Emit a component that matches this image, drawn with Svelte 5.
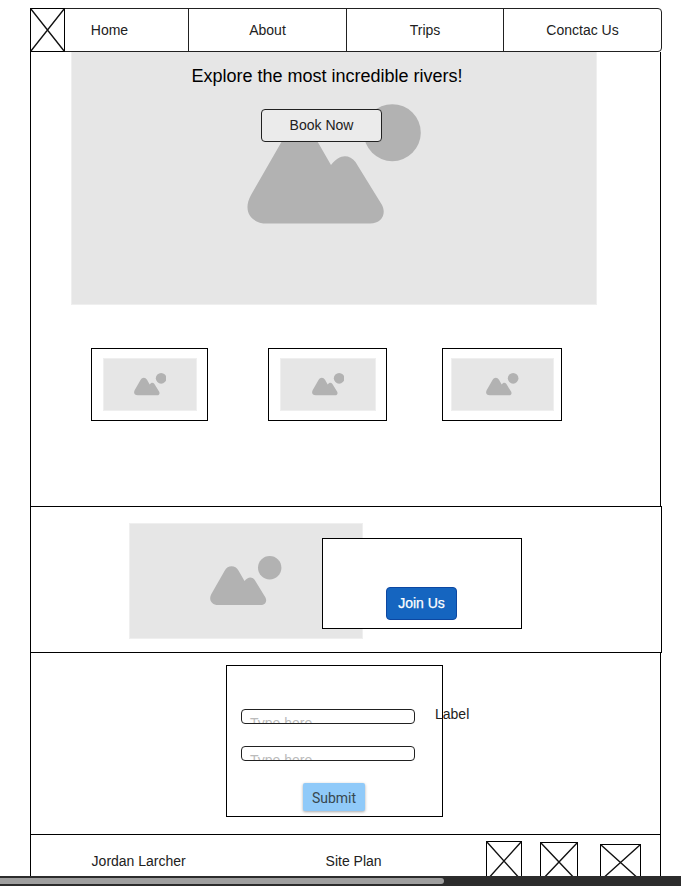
<script>
  const links = ['Home', 'About', 'Trips', 'Conctac Us'];
  const cards = [
    { width: 117, gap: 0, left: 11, right: 10 },
    { width: 119, gap: 60, left: 11, right: 10 },
    { width: 120, gap: 55, left: 8, right: 7 }
  ];
  const socials = [
    { width: 36, height: 40, top: 6 },
    { width: 38, height: 40, top: 7 },
    { width: 41, height: 37, top: 9 }
  ];
</script>

{#snippet picture(width)}
  <svg class="picture" {width} height={(width * 120) / 174} viewBox="0 0 174 120" aria-hidden="true">
    <path d="M84 61 L69.6 36 C62 21.5 43 21.5 35.6 36 L4 91 C-4.5 106 3 119.5 20 119.5 H123 C135 119.5 139.5 110 135 101 L108.5 58 C102 49.5 92 50 84 61Z" />
    <circle cx="145.3" cy="28.7" r="28.5" />
  </svg>
{/snippet}

{#snippet crossed(width, height)}
  <svg class="crossed" {width} {height} aria-hidden="true">
    <rect x=".5" y=".5" width={width - 1} height={height - 1} />
    <path d="M.5 .5 L{width - 0.5} {height - 0.5} M{width - 0.5} .5 L.5 {height - 0.5}" />
  </svg>
{/snippet}

<div class="page">
  <nav>
    <span class="logo">{@render crossed(35, 44)}</span>
    {#each links as link}
      <a href="#top">{link}</a>
    {/each}
  </nav>
  <div class="frame">
    <section class="hero">
      <h1>Explore the most incredible rivers!</h1>
      <button class="book">Book Now</button>
      <div class="hero-picture">{@render picture(174)}</div>
    </section>

    <section class="cards">
      {#each cards as card}
        <div
          class="card"
          style="width:{card.width}px;margin-left:{card.gap}px;padding-left:{card.left}px;padding-right:{card.right}px"
        >
          <div class="placeholder">{@render picture(32.5)}</div>
        </div>
      {/each}
    </section>

    <section class="join">
      <div class="placeholder">{@render picture(71.5)}</div>
      <div class="panel"><button>Join Us</button></div>
    </section>

    <section class="contact">
      <form>
        <div class="field"><span>Type here</span></div>
        <div class="field"><span>Type here</span></div>
        <button type="button">Submit</button>
      </form>
      <span class="label">Label</span>
    </section>

    <footer>
      <span class="author">Jordan Larcher</span>
      <span class="plan">Site Plan</span>
      <div class="socials">
        {#each socials as s}
          <span style="margin-top:{s.top}px">{@render crossed(s.width, s.height)}</span>
        {/each}
      </div>
    </footer>
  </div>
  <div class="scrollbar"><div class="thumb"></div></div>
</div>

<style>
  * {
    box-sizing: border-box;
  }
  .page {
    display: flex;
    flex-direction: column;
    width: 681px;
    height: 886px;
    padding-top: 8px;
    overflow: hidden;
    background: #fff;
    color: #212121;
    font: 14px/16px 'Liberation Sans', Arial, sans-serif;
  }
  svg {
    display: block;
    flex: none;
  }
  button {
    font: inherit;
    padding: 0;
    display: block;
  }
  .picture {
    fill: #b2b2b2;
  }
  .crossed {
    fill: none;
    stroke: #000;
    stroke-width: 1;
  }
  .crossed path {
    stroke: #111;
    stroke-width: 1.4;
  }
  nav {
    display: flex;
    flex: none;
    width: 632px;
    height: 44px;
    margin-left: 30px;
    border: 1px solid #212121;
    border-radius: 0 4px 4px 0;
    background: #fff;
  }
  .logo {
    flex: none;
    width: 34px;
    margin: -1px 0 0 -1px;
    height: 44px;
  }
  nav a {
    flex: none;
    width: 158px;
    border-right: 1px solid #212121;
    color: inherit;
    text-decoration: none;
    text-align: center;
    line-height: 43px;
  }
  nav a:first-of-type {
    width: 125px;
    padding-right: 33px;
  }
  nav a:nth-of-type(3) {
    width: 157px;
  }
  nav a:last-child {
    width: 157px;
    border-right: 0;
  }
  .frame {
    flex: none;
    width: 631px;
    height: 824px;
    margin-left: 30px;
    border: solid #000;
    border-width: 0 1px;
  }
  .hero {
    display: flex;
    flex-direction: column;
    align-items: center;
    position: relative;
    width: 526px;
    height: 253px;
    margin-left: 40px;
    background: #e6e6e6;
    border: solid #efefef;
    border-width: 0 1px 1px;
  }
  h1 {
    margin: 14px 14px 0 0;
    font-weight: 400;
    font-size: 18px;
    line-height: 20px;
    color: #000;
  }
  .book {
    position: relative;
    z-index: 1;
    width: 121px;
    height: 33px;
    margin: 23px 25px 0 0;
    padding-bottom: 2px;
    border: 1px solid #212121;
    border-radius: 4px;
    background: #ebebeb;
    color: #212121;
  }
  .hero-picture {
    position: absolute;
    left: 175px;
    top: 52px;
  }
  .cards {
    display: flex;
    height: 201px;
    padding: 43px 0 0 60px;
  }
  .card {
    height: 73px;
    padding-top: 9px;
    border: 1px solid #000;
  }
  .placeholder {
    display: flex;
    align-items: center;
    justify-content: center;
    height: 53px;
    background: #e6e6e6;
    border: 1px solid #efefef;
  }
  .join {
    display: flex;
    position: relative;
    width: 632px;
    height: 147px;
    margin-left: -1px;
    padding: 16px 0 0 98px;
    border: 1px solid #000;
    background: #fff;
  }
  .join .placeholder {
    width: 234px;
    height: 116px;
  }
  .panel {
    width: 200px;
    height: 91px;
    margin: 15px 0 0 -41px;
    padding: 48px 0 0 63px;
    border: 1px solid #000;
    background: #fff;
  }
  .panel button {
    width: 71px;
    height: 33px;
    padding-bottom: 2px;
    border: 1px solid #0d47a1;
    border-radius: 4px;
    background: #1565c0;
    color: #fff;
    -webkit-text-stroke: 0.25px #fff;
  }
  .contact {
    display: flex;
    height: 181px;
    padding: 12px 0 0 195px;
  }
  form {
    width: 217px;
    height: 152px;
    padding: 43px 0 0 14px;
    border: 1px solid #000;
  }
  .field {
    width: 174px;
    height: 15px;
    margin-bottom: 22px;
    padding: 5px 0 0 8px;
    border: 1px solid #212121;
    border-radius: 4px;
    overflow: hidden;
    color: #bbb;
  }
  .field span {
    display: block;
  }
  form button {
    width: 62px;
    height: 28px;
    margin-left: 62px;
    border: 0;
    border-radius: 2px;
    background: #90caf9;
    box-shadow: 0 1px 3px rgb(0 0 0 / 0.35);
    color: #37474f;
    font-family: Roboto, sans-serif;
    line-height: 30px;
  }
  .label {
    margin: 41px 0 0 -8px;
    position: relative;
  }
  footer {
    display: flex;
    height: 42px;
    padding-left: 60.6px;
    border-top: 1px solid #000;
  }
  .author,
  .plan {
    flex: none;
    width: 234px;
    padding-top: 18px;
  }
  .plan {
    width: 160.4px;
  }
  .socials {
    display: flex;
    align-items: flex-start;
    gap: 18px;
  }
  .socials span:last-child {
    margin-left: 4px;
  }
  .scrollbar {
    position: relative;
    flex: none;
    height: 10px;
    padding-top: 2px;
    background: #2c2c2c;
  }
  .thumb {
    width: 444px;
    height: 6px;
    border-radius: 0 3px 3px 0;
    background: #9f9f9f;
  }
</style>
